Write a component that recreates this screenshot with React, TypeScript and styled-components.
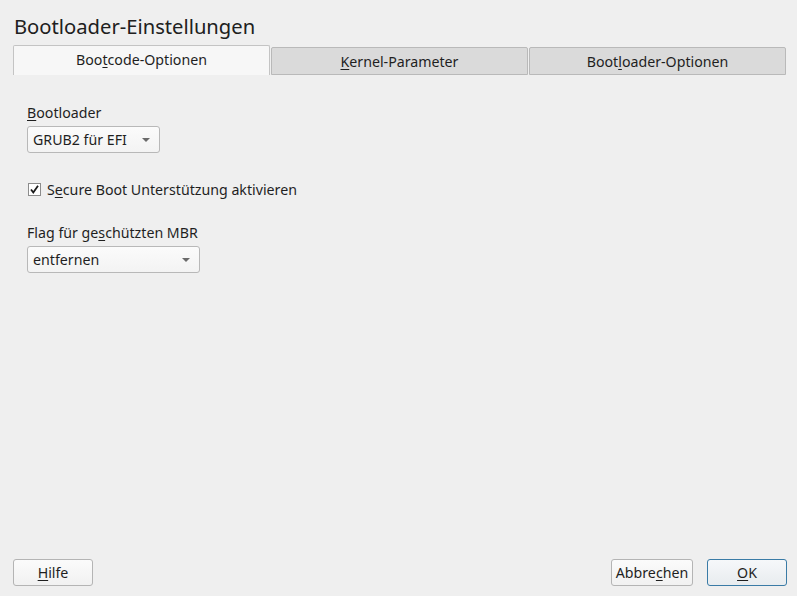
import React from "react";
import styled, { createGlobalStyle } from "styled-components";

const Global = createGlobalStyle`
  html, body { margin: 0; padding: 0; background: #efefef; }
  body { font-family: "Noto Sans", "DejaVu Sans", sans-serif; color: #1f1f1f; }
  * { box-sizing: border-box; }
`;

const Window = styled.div`
  width: 797px;
  height: 596px;
  background: #efefef;
  display: flex;
  flex-direction: column;
  padding: 12px 10px 10px 13px;
`;

const Title = styled.div`
  font-size: 20.2px;
  line-height: 28px;
  padding-left: 1px;
  color: #202020;
`;

const TabBar = styled.div`
  display: flex;
  align-items: flex-end;
  height: 30px;
  margin-top: 5px;
  padding-right: 1px;
`;

const Tab = styled.div<{ $active?: boolean }>`
  flex: 1;
  height: ${(p) => (p.$active ? "30px" : "28px")};
  display: flex;
  align-items: center;
  justify-content: center;
  font-size: 14.2px;
  border: 1px solid ${(p) => (p.$active ? "#c4c4c4" : "#b9b9b9")};
  border-bottom: ${(p) => (p.$active ? "none" : "1px solid #b9b9b9")};
  border-radius: 2px 2px 0 0;
  background: ${(p) => (p.$active ? "#f7f7f7" : "#dadada")};
  margin-left: ${(p) => (p.$active ? "0" : "1px")};
  padding-bottom: ${(p) => (p.$active ? "2px" : "0")};
  color: #1f1f1f;
`;

const U = styled.span`
  text-decoration: underline;
  text-underline-offset: 2px;
  text-decoration-thickness: 1px;
`;

const Content = styled.div`
  flex: 1;
  display: flex;
  flex-direction: column;
  padding: 29px 0 0 14px;
`;

const Label = styled.div`
  font-size: 14.2px;
  line-height: 18px;
  margin-bottom: 4px;
`;

const Combo = styled.div<{ $w: number }>`
  width: ${(p) => p.$w}px;
  height: 27px;
  border: 1px solid #b8b8b8;
  border-radius: 3px;
  background: linear-gradient(#fbfbfb, #f3f3f3);
  display: flex;
  align-items: center;
  justify-content: space-between;
  padding: 0 9px 0 5px;
  font-size: 14.2px;
`;

const Arrow = styled.span`
  width: 0;
  height: 0;
  border-left: 4px solid transparent;
  border-right: 4px solid transparent;
  border-top: 4px solid #6a6a6a;
  margin-top: 1px;
`;

const Group = styled.div<{ $mt: number }>`
  margin-top: ${(p) => p.$mt}px;
  display: flex;
  flex-direction: column;
  align-items: flex-start;
`;

const CheckRow = styled.div`
  display: flex;
  align-items: center;
  gap: 6px;
  font-size: 14.2px;
  margin-left: 1px;
`;

const Box = styled.span`
  width: 13px;
  height: 13px;
  border: 1px solid #8c8c8c;
  background: #fff;
  display: flex;
  align-items: center;
  justify-content: center;
`;

const Footer = styled.div`
  display: flex;
  align-items: center;
  gap: 14px;
`;

const Spacer = styled.div`
  flex: 1;
`;

const Button = styled.div<{ $w: number; $default?: boolean }>`
  width: ${(p) => p.$w}px;
  height: 27px;
  border: 1px solid ${(p) => (p.$default ? "#3a7ba6" : "#b4b4b4")};
  border-radius: 3px;
  background: ${(p) =>
    p.$default ? "linear-gradient(#f6f8fa, #e8ecef)" : "linear-gradient(#fbfbfb, #f1f1f1)"};
  display: flex;
  align-items: center;
  justify-content: center;
  font-size: 14.2px;
`;

export default function App() {
  return (
    <>
      <Global />
      <Window>
        <Title>Bootloader-Einstellungen</Title>
        <TabBar>
          <Tab $active>
            Boo<U>t</U>code-Optionen
          </Tab>
          <Tab>
            <U>K</U>ernel-Parameter
          </Tab>
          <Tab>
            Boot<U>l</U>oader-Optionen
          </Tab>
        </TabBar>
        <Content>
          <Group $mt={0}>
            <Label>
              <U>B</U>ootloader
            </Label>
            <Combo $w={133}>
              <span>GRUB2 für EFI</span>
              <Arrow />
            </Combo>
          </Group>
          <Group $mt={27}>
            <CheckRow>
              <Box>
                <svg width="11" height="11" viewBox="0 0 11 11">
                  <path d="M2 5.5 L4.3 8.5 L9 1.8" fill="none" stroke="#1a1a1a" strokeWidth="1.8" />
                </svg>
              </Box>
              <span>
                S<U>e</U>cure Boot Unterstützung aktivieren
              </span>
            </CheckRow>
          </Group>
          <Group $mt={25}>
            <Label>
              Flag für ge<U>s</U>chützten MBR
            </Label>
            <Combo $w={173}>
              <span>entfernen</span>
              <Arrow />
            </Combo>
          </Group>
        </Content>
        <Footer>
          <Button $w={80}>
            <U>H</U>ilfe
          </Button>
          <Spacer />
          <Button $w={82}>
            Abbre<U>c</U>hen
          </Button>
          <Button $w={80} $default>
            <U>O</U>K
          </Button>
        </Footer>
      </Window>
    </>
  );
}
